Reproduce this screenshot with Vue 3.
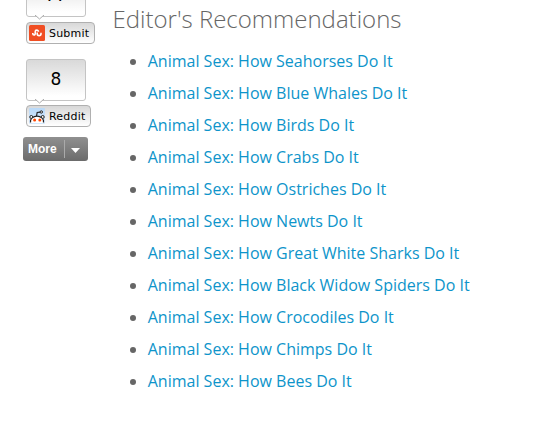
<script setup>
const subjects = ['Seahorses', 'Blue Whales', 'Birds', 'Crabs', 'Ostriches', 'Newts', 'Great White Sharks', 'Black Widow Spiders', 'Crocodiles', 'Chimps', 'Bees']
</script>

<template>
  <div class="page">
    <aside class="share">
      <div class="bubble first"><span>77</span><svg class="tail" width="9" height="5" viewBox="0 0 9 5"><path d="M0 0 4.5 4 9 0" fill="#fff" stroke="#aaa" /></svg></div>
      <a class="button submit">
        <svg width="16" height="16" viewBox="0 0 16 16"><rect width="16" height="16" rx="1.5" fill="#f04e23" /><path d="M3.8 8v.8a1.2 1.2 0 0 0 2.4 0V6.7a1.6 1.6 0 0 1 3.2 0M8.2 7.6v1.2a1.9 1.9 0 0 0 3.8 0V7.7" fill="none" stroke="#fff" stroke-width="1.6" /></svg>
        <span>Submit</span>
      </a>
      <div class="bubble second"><span>8</span><svg class="tail" width="9" height="5" viewBox="0 0 9 5"><path d="M0 0 4.5 4 9 0" fill="#fff" stroke="#aaa" /></svg></div>
      <a class="button reddit">
        <svg width="16" height="16" viewBox="0 0 16 16"><defs><linearGradient id="sky" x2="0" y2="1"><stop stop-color="#b9d9f8" /><stop offset="1" stop-color="#d5e8fc" /></linearGradient></defs><rect width="16" height="16" rx="1" fill="url(#sky)" /><path d="M7.5 8 8.2 4.5l3.2-.3" fill="none" stroke="#222" stroke-width="1.2" /><circle cx="12.3" cy="4" r="1.2" fill="#eee" stroke="#222" /><circle cx="2.3" cy="9" r="1.5" fill="#fff" stroke="#222" /><circle cx="13.7" cy="9" r="1.5" fill="#fff" stroke="#222" /><path d="M1 15v-2C1.5 9.8 4.5 8.2 8 8.2s6.5 1.6 7 4.8v2z" fill="#fff" /><path d="M1.5 14.5C.8 10.5 4.5 8.2 8 8.2s7.2 2.3 6.5 6.3" fill="none" stroke="#222" stroke-width="1.2" /><circle cx="5.6" cy="12" r="1.5" fill="#ff4500" /><circle cx="10.8" cy="12" r="1.5" fill="#ff4500" /></svg>
        <span>Reddit</span>
      </a>
      <a class="more"><b>More</b><i></i><svg width="9" height="5" viewBox="0 0 9 5"><path d="M0 0h9L4.5 5z" fill="#fff" /></svg></a>
    </aside>
    <main>
      <h2>Editor's Recommendations</h2>
      <ul><li v-for="s in subjects" :key="s"><a>Animal Sex: How {{ s }} Do It</a></li></ul>
    </main>
  </div>
</template>

<style>
body { background: #fff; }
</style>
<style scoped>
.page { display: flex; width: 534px; height: 428px; overflow: hidden; }
.share { display: flex; flex-direction: column; align-items: flex-start; width: 112.5px; box-sizing: border-box; padding-left: 26px; flex-shrink: 0; }
.bubble { position: relative; box-sizing: border-box; width: 60px; height: 42px; flex-shrink: 0; border: 1px solid #c4c4c4; border-radius: 3px; background: linear-gradient(#d9d9d9, #fff 90%); font: 17px/38px "DejaVu Sans", sans-serif; color: #000; text-align: center; }
.first { margin-top: -25px; }
.second { margin-top: 15px; }
.tail { position: absolute; left: 8px; top: 39px; }
.button { display: flex; align-items: center; box-sizing: border-box; height: 22px; margin-top: 5px; padding-left: 2px; gap: 4px; border: 1px solid #b0b0b0; border-radius: 4px; background: linear-gradient(#d8d8d8, #fff); font: 11px/20px "DejaVu Sans", sans-serif; color: #000; }
.button span { padding-top: 1px; letter-spacing: 0.2px; }
.submit { width: 69px; }
.reddit { width: 65px; margin-top: 4px; }
.more { display: flex; align-items: center; box-sizing: border-box; width: 65px; height: 24px; margin: 10px 0 0 -3px; padding-left: 5px; border-radius: 3px; background: linear-gradient(#909090, #6b6b6b); color: #fff; font: 12px/24px "Liberation Sans", sans-serif; }
.more b { width: 36px; }
.more i { width: 1px; height: 18px; background: #aaa; margin-right: 6px; }
.more svg { margin-top: 2px; }
main { color: #666; font-family: "Open Sans", sans-serif; }
h2 { margin: 1px 0 0; font-size: 24px; line-height: 36px; font-weight: 300; white-space: nowrap; }
ul { margin: 8px 0 0; padding-left: 35.25px; font-size: 16px; line-height: 32px; white-space: nowrap; }
li a { color: #0d94ca; }
</style>
